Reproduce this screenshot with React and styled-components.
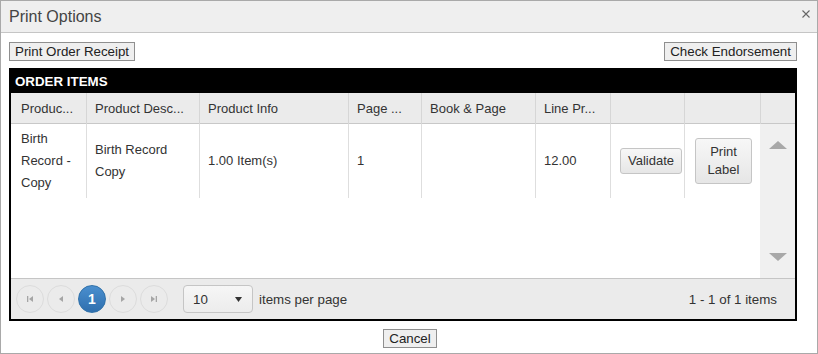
import React from "react"
import styled, { createGlobalStyle } from "styled-components"

const Global = createGlobalStyle`
  body { margin: 0; background: #fff; font-family: "Liberation Sans", Arial, sans-serif; }
`

const cols = "75px 113px 149px 73px 114px 75px 74px 76px"

const Dialog = styled.div`
  width: 818px;
  height: 354px;
  box-sizing: border-box;
  border: 1px solid #a9a9a9;
  background: #fff;
  display: flex;
  flex-direction: column;
`

const TitleBar = styled.div`
  height: 31px;
  border-bottom: 1px solid #c5c5c5;
  background: #efefef;
  display: flex;
  align-items: center;
  justify-content: space-between;
  padding: 0 7px 0 8px;
  font-size: 16px;
  color: #444;
`

const Close = styled.svg`
  align-self: flex-start;
  margin-top: 9px;
`

const Content = styled.div`
  padding: 9px 20px 0 8px;
`

const TopRow = styled.div`
  display: flex;
  justify-content: space-between;
`

const PlainButton = styled.button`
  font-family: "Liberation Sans", Arial, sans-serif;
  font-size: 13.33px;
  line-height: 15px;
  padding: 1px 5px;
  border: 1px solid #8f8f8f;
  background: #efefef;
  color: #222;
  border-radius: 0;
`

const Grid = styled.div`
  margin-top: 7px;
  border: 2px solid #000;
`

const GridTitle = styled.div`
  height: 23px;
  line-height: 24px;
  background: #000;
  color: #fff;
  font-weight: bold;
  font-size: 13.33px;
  padding-left: 4px;
`

const HeaderRow = styled.div`
  display: grid;
  grid-template-columns: ${cols} 35px;
  height: 30px;
  border-bottom: 1px solid #c8c8c8;
  background: #ebebeb;
`

const HeadCell = styled.div`
  border-left: ${p => (p.$first ? "none" : "1px solid #d6d6d6")};
  padding: 0 0 0 ${p => (p.$first ? "10px" : "8px")};
  line-height: 31px;
  font-size: 13px;
  color: #333;
  white-space: nowrap;
`

const Body = styled.div`
  display: flex;
  height: 154px;
`

const Rows = styled.div`
  flex: 1;
`

const Row = styled.div`
  display: grid;
  grid-template-columns: ${cols};
  height: 74px;
`

const Cell = styled.div`
  border-left: ${p => (p.$first ? "none" : "1px solid #dedede")};
  padding: 0 8px 0 ${p => (p.$first ? "10px" : "8px")};
  display: flex;
  align-items: center;
  font-size: 13px;
  line-height: 22px;
  color: #333;
`

const RowButton = styled.button`
  font-family: "Liberation Sans", Arial, sans-serif;
  font-size: 13px;
  line-height: 18px;
  padding: ${p => (p.$tall ? "4px 9px" : "3px 7px")};
  border: 1px solid #c5c5c5;
  border-radius: 3px;
  background: linear-gradient(#f7f7f7, #e6e6e6);
  color: #333;
  margin-left: ${p => (p.$tall ? "2px" : "1px")};
`

const Scrollbar = styled.div`
  width: 37px;
  background: #f0f0f0;
  display: flex;
  flex-direction: column;
  justify-content: space-between;
  align-items: center;
  padding: 17px 0;
  box-sizing: border-box;
`

const Pager = styled.div`
  height: 40px;
  border-top: 1px solid #c5c5c5;
  background: #ebebeb;
  display: flex;
  align-items: center;
  padding: 0 18px 0 5px;
  font-size: 13.33px;
  color: #333;
`

const PageButton = styled.div`
  width: 28px;
  height: 28px;
  box-sizing: border-box;
  border-radius: 50%;
  margin-right: 3px;
  display: flex;
  align-items: center;
  justify-content: center;
  border: 1px solid ${p => (p.$active ? "#3071a9" : "#dcdcdc")};
  background: ${p => (p.$active ? "linear-gradient(#4a8fcf, #2f6fae)" : "transparent")};
  color: #fff;
  font-weight: bold;
  font-size: 14px;
`

const SizeSelect = styled.div`
  margin-left: 12px;
  width: 70px;
  height: 28px;
  box-sizing: border-box;
  border: 1px solid #c5c5c5;
  border-radius: 4px;
  background: linear-gradient(#f6f6f6, #ececec);
  display: flex;
  align-items: center;
  justify-content: space-between;
  padding: 0 10px 0 9px;
  font-size: 13.33px;
  color: #333;
`

const PerPage = styled.span`
  margin-left: 6px;
`

const Info = styled.span`
  margin-left: auto;
`

const Footer = styled.div`
  display: flex;
  justify-content: center;
  margin-top: 8px;
  padding-left: 2px;
`

const Tri = ({ dir = "up" }) => (
  <svg width="18" height="8" viewBox="0 0 18 8">
    <path d={dir === "up" ? "M0 8 L9 0 L18 8 Z" : "M0 0 L9 8 L18 0 Z"} fill="#a8a8a8" />
  </svg>
)

const PagerIcon = ({ kind }) => {
  const c = "#a5a5a5"
  if (kind === "first")
    return (
      <svg width="8" height="8" viewBox="0 0 8 8">
        <rect x="1" y="1" width="1.3" height="6" fill={c} />
        <path d="M7 1 L3 4 L7 7 Z" fill={c} />
      </svg>
    )
  if (kind === "last")
    return (
      <svg width="8" height="8" viewBox="0 0 8 8">
        <rect x="5.7" y="1" width="1.3" height="6" fill={c} />
        <path d="M1 1 L5 4 L1 7 Z" fill={c} />
      </svg>
    )
  return (
    <svg width="8" height="8" viewBox="0 0 8 8">
      <path d={kind === "prev" ? "M6 1 L2 4 L6 7 Z" : "M2 1 L6 4 L2 7 Z"} fill={c} />
    </svg>
  )
}

const Caret = () => (
  <svg width="7" height="5" viewBox="0 0 7 5">
    <path d="M0 0 L7 0 L3.5 5 Z" fill="#333" />
  </svg>
)

const headers = ["Produc...", "Product Desc...", "Product Info", "Page ...", "Book & Page", "Line Pr...", "", "", ""]

export default function App() {
  return (
    <>
      <Global />
      <Dialog>
        <TitleBar>
          <span>Print Options</span>
          <Close width="8" height="8" viewBox="0 0 8 8">
            <path d="M0.5 0.5 L7.5 7.5 M7.5 0.5 L0.5 7.5" stroke="#666" strokeWidth="1.1" />
          </Close>
        </TitleBar>
        <Content>
          <TopRow>
            <PlainButton>Print Order Receipt</PlainButton>
            <PlainButton>Check Endorsement</PlainButton>
          </TopRow>
          <Grid>
            <GridTitle>ORDER ITEMS</GridTitle>
            <HeaderRow>
              {headers.map((h, i) => (
                <HeadCell key={i} $first={i === 0}>{h}</HeadCell>
              ))}
            </HeaderRow>
            <Body>
              <Rows>
                <Row>
                  <Cell $first>Birth Record - Copy</Cell>
                  <Cell>Birth Record Copy</Cell>
                  <Cell>1.00 Item(s)</Cell>
                  <Cell>1</Cell>
                  <Cell></Cell>
                  <Cell>12.00</Cell>
                  <Cell><RowButton>Validate</RowButton></Cell>
                  <Cell><RowButton $tall>Print Label</RowButton></Cell>
                </Row>
              </Rows>
              <Scrollbar>
                <Tri dir="up" />
                <Tri dir="down" />
              </Scrollbar>
            </Body>
            <Pager>
              <PageButton><PagerIcon kind="first" /></PageButton>
              <PageButton><PagerIcon kind="prev" /></PageButton>
              <PageButton $active>1</PageButton>
              <PageButton><PagerIcon kind="next" /></PageButton>
              <PageButton><PagerIcon kind="last" /></PageButton>
              <SizeSelect>
                <span>10</span>
                <Caret />
              </SizeSelect>
              <PerPage>items per page</PerPage>
              <Info>1 - 1 of 1 items</Info>
            </Pager>
          </Grid>
        </Content>
        <Footer>
          <PlainButton>Cancel</PlainButton>
        </Footer>
      </Dialog>
    </>
  )
}
